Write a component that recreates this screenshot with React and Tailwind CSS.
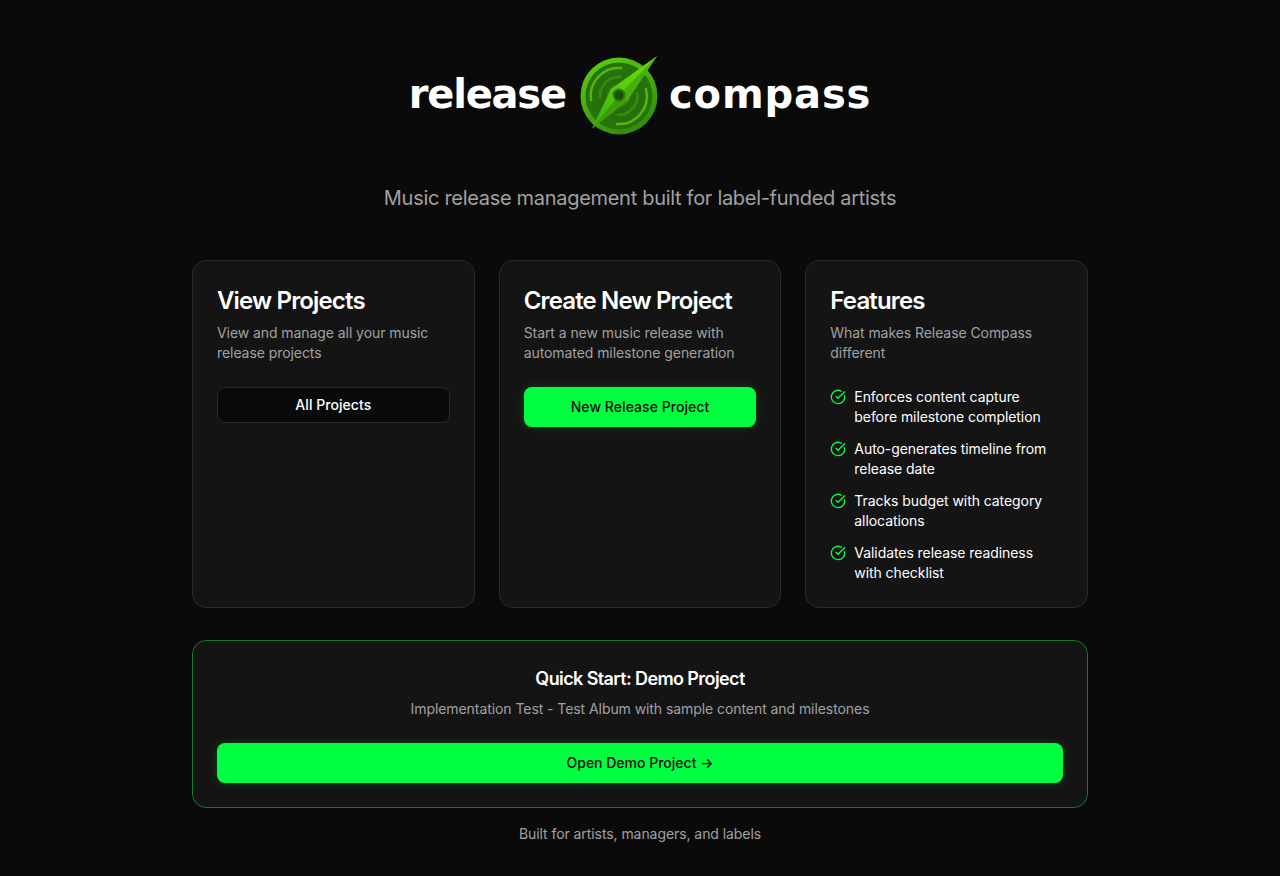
import { CircleCheckBig } from "lucide-react";

// ─── Compass logo ────────────────────────────────────────────────────────────
function CompassLogo() {
  return (
    <svg width="78" height="81" viewBox="0 0 78 81" className="shrink-0">
      <defs>
        <linearGradient id="ring" x1="0.2" y1="0" x2="0.7" y2="1">
          <stop offset="0" stopColor="#5ccb12" />
          <stop offset="1" stopColor="#2f8a0c" />
        </linearGradient>
        <radialGradient id="disc" cx="0.5" cy="0.5" r="0.6">
          <stop offset="0" stopColor="#256a0c" />
          <stop offset="1" stopColor="#27750c" />
        </radialGradient>
        <linearGradient id="needle" x1="1" y1="0" x2="0" y2="1">
          <stop offset="0" stopColor="#66e406" />
          <stop offset="0.5" stopColor="#55cc0a" />
          <stop offset="1" stopColor="#40ad0c" />
        </linearGradient>
      </defs>
      <circle cx="39" cy="41" r="38.5" fill="url(#ring)" />
      <circle cx="39" cy="41" r="33.5" fill="url(#disc)" />
      <g fill="none" strokeLinecap="round">
        <path d="M11 45 A28 28 0 0 1 41 13" stroke="#55b612" strokeWidth="2.5" />
        <path d="M66 34 A28 28 0 0 1 37 69" stroke="#55b612" strokeWidth="2.5" />
        <path d="M20 42 A19 19 0 0 1 40 22" stroke="#368c10" strokeWidth="2.5" />
        <path d="M57 38 A19 19 0 0 1 38 60" stroke="#368c10" strokeWidth="2.5" />
        <path d="M28 41 A11 11 0 0 1 39 30" stroke="#2f8210" strokeWidth="2" />
        <path d="M50 40 A11 11 0 0 1 39 51" stroke="#2f8210" strokeWidth="2" />
      </g>
      <path d="M77 1 L47 46 L12 73.5 L31 34 Z" fill="url(#needle)" />
      <path d="M77 1 L47 46 L39 40 Z" fill="#48ae0c" />
      <path d="M12 73.5 L39 40 L47 46 Z" fill="#3c9c0c" />
      <circle cx="39" cy="40" r="6.5" fill="#2f7a10" />
      <circle cx="39" cy="40" r="4.5" fill="#1d4f0c" />
    </svg>
  );
}

// ─── Card ────────────────────────────────────────────────────────────────────
function Card({ title, desc, children }) {
  return (
    <div className="bg-[#141414] border border-[#2a2a2a] rounded-[14px] p-6 flex flex-col">
      <h2 className="text-2xl leading-8 font-semibold tracking-[-0.85px] text-white">{title}</h2>
      <p className="mt-[6px] text-sm leading-5 tracking-[-0.07px] text-[#a1a1a1]">{desc}</p>
      <div className="mt-6">{children}</div>
    </div>
  );
}

const features = [
  "Enforces content capture before milestone completion",
  "Auto-generates timeline from release date",
  "Tracks budget with category allocations",
  "Validates release readiness with checklist",
];

// ─── Page ────────────────────────────────────────────────────────────────────
export default function App() {
  return (
    <div className="min-h-[876px] bg-[#0a0a0a] font-['Inter',sans-serif] flex flex-col items-center pt-[55px]">
      <div className="flex items-center h-[81px]">
        <span className="font-['DejaVu_Sans',sans-serif] font-bold text-[40px] leading-none text-white tracking-[-1.2px] pb-[3px] mr-[14px]">release</span>
        <CompassLogo />
        <span className="font-['DejaVu_Sans',sans-serif] font-bold text-[40px] leading-none text-white tracking-[0.9px] pb-[3px] ml-[11px]">compass</span>
      </div>

      <p className="mt-[48px] text-xl leading-7 tracking-[-0.3px] text-[#a1a1a1]">
        Music release management built for label-funded artists
      </p>

      <div className="mt-[48px] w-[896px] grid grid-cols-3 gap-6">
        <Card title="View Projects" desc="View and manage all your music release projects">
          <button className="w-full h-9 rounded-lg bg-[#0a0a0a] border border-[#2a2a2a] text-sm font-medium tracking-[0.05px] text-white">
            All Projects
          </button>
        </Card>
        <Card title="Create New Project" desc="Start a new music release with automated milestone generation">
          <button className="w-full h-10 rounded-lg bg-[#00ff41] text-sm font-medium tracking-[0.05px] text-[#0a0a0a] shadow-[0_0_8px_rgba(0,255,65,0.2)]">
            New Release Project
          </button>
        </Card>
        <Card title="Features" desc="What makes Release Compass different">
          <ul className="flex flex-col gap-3">
            {features.map((f) => (
              <li key={f} className="flex gap-2 text-sm leading-5 tracking-[-0.07px] text-white">
                <CircleCheckBig size={16} strokeWidth={2} className="text-[#00ff41] shrink-0 mt-0.5" />
                <span>{f}</span>
              </li>
            ))}
          </ul>
        </Card>
      </div>

      <div className="mt-8 w-[896px] bg-[#141414] border border-[#0f7a2a] rounded-[14px] p-6 flex flex-col items-center">
        <h3 className="text-lg leading-7 font-semibold tracking-[-0.6px] text-white">Quick Start: Demo Project</h3>
        <p className="mt-[6px] text-sm leading-5 tracking-[-0.07px] text-[#a1a1a1]">
          Implementation Test - Test Album with sample content and milestones
        </p>
        <button className="mt-6 w-full h-10 rounded-lg bg-[#00ff41] text-sm font-medium text-[#0a0a0a] shadow-[0_0_8px_rgba(0,255,65,0.2)]">
          Open Demo Project →
        </button>
      </div>

      <p className="mt-4 text-sm leading-5 tracking-[-0.07px] text-[#a1a1a1]">Built for artists, managers, and labels</p>
    </div>
  );
}
